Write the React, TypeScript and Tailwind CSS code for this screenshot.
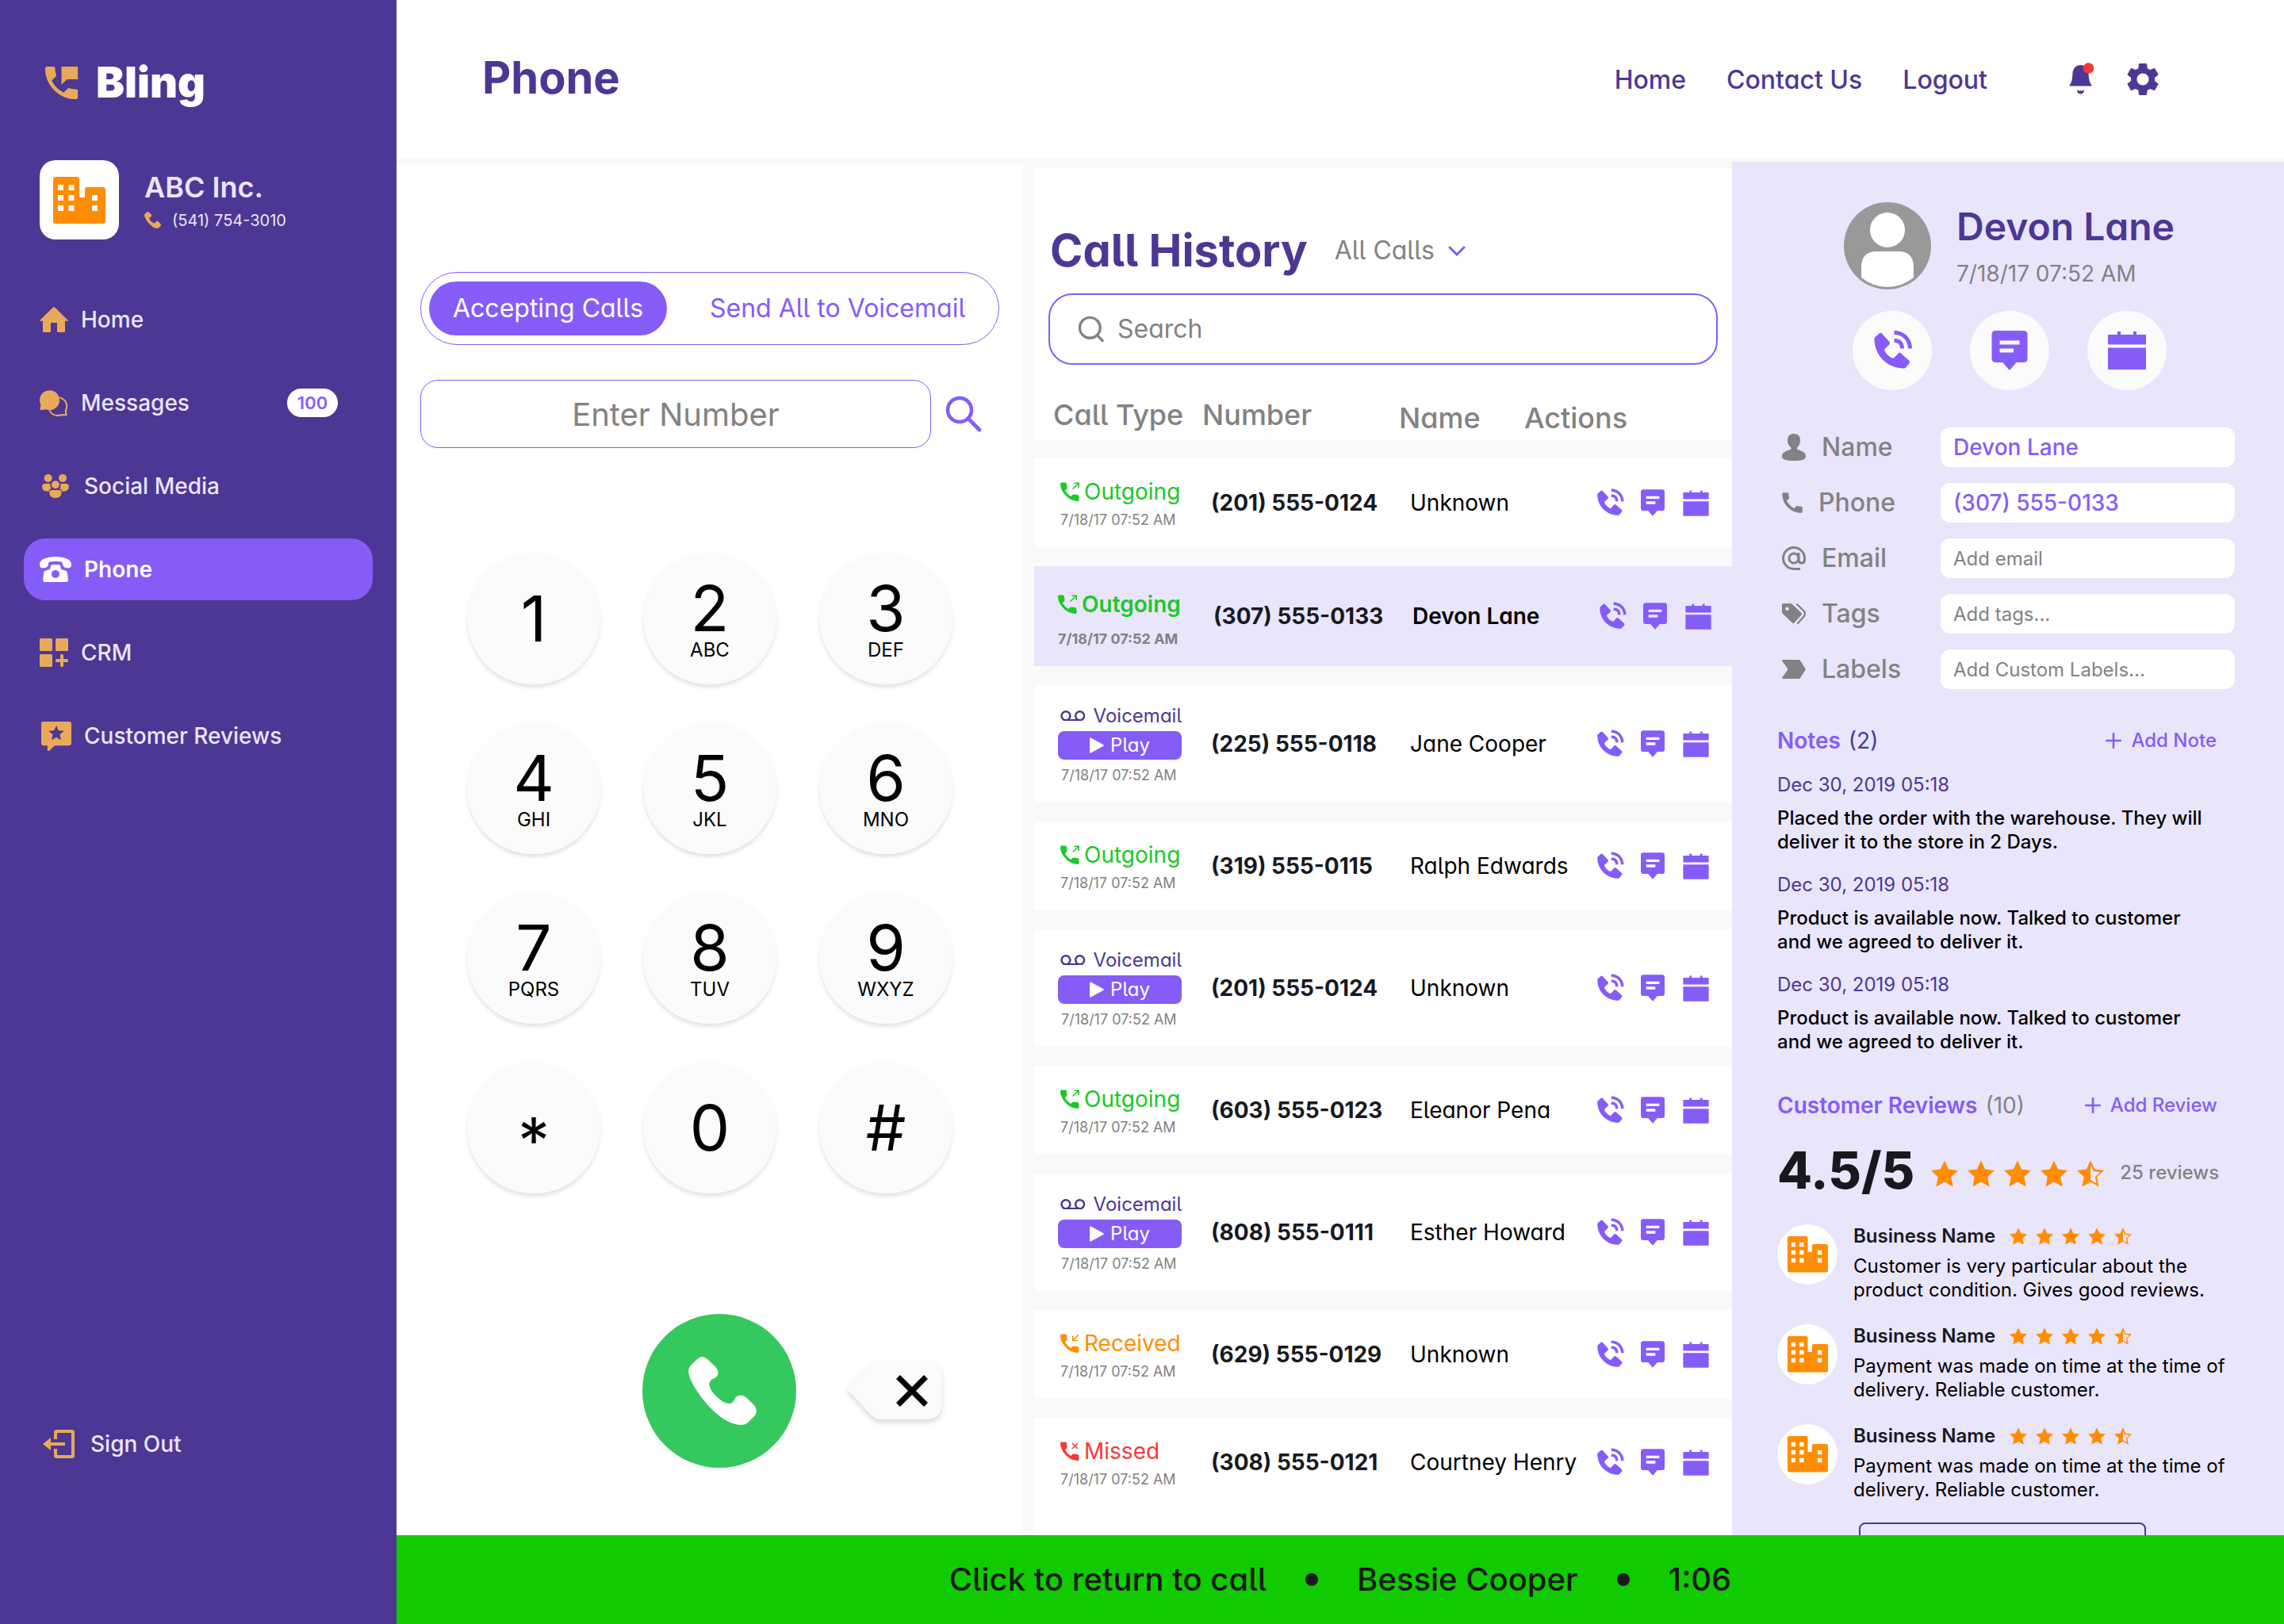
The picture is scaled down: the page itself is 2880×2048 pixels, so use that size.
import React from "react";
import { BiSolidPhoneCall } from "react-icons/bi";
import { MdPermPhoneMsg, MdSettings, MdCall } from "react-icons/md";

/* Inter with single-storey "a" and tailed "l" */
const ALT = "[font-feature-settings:'cv05','cv11']";

type IconProps = { className?: string };

function BuildingIcon({ className }: IconProps) {
  return (
    <svg viewBox="0 0 66 59" className={className} fill="currentColor" aria-hidden="true">
      <path
        fillRule="evenodd"
        d="M3 0H30a3 3 0 0 1 3 3V26H40V16a3 3 0 0 1 3-3H63a3 3 0 0 1 3 3V56a3 3 0 0 1-3 3H3a3 3 0 0 1-3-3V3a3 3 0 0 1 3-3ZM6 10v7h7v-7ZM19.500 10v7h7v-7ZM6 23v7h7v-7ZM19.500 23v7h7v-7ZM6 36v7h7v-7ZM19.500 36v7h7v-7ZM49 23v7h7v-7ZM49 36v7h7v-7Z"
      />
    </svg>
  );
}

function HandsetIcon({ className }: IconProps) {
  return (
    <svg viewBox="0 0 86 87" className={className} fill="currentColor" aria-hidden="true">
      <path d="M11 3Q17-3 24 3L34 12.500Q39 18 37 23Q35.500 26.500 31.500 27.500Q26.500 29.500 26.300 34.500Q27 43 37 51.500Q45 59 51 59Q56.500 59 58.500 53Q61 48.500 66 48.500Q70 48.500 72.500 51L83 61Q88 67 84 74L75 83Q72 86 66 86Q43 85 17 52Q0 29 0 17.500Q0 14 3 11Z" />
    </svg>
  );
}

function HomeIcon({ className }: IconProps) {
  return (
    <svg viewBox="0 0 36 32" className={className} fill="currentColor" aria-hidden="true">
      <path d="M17 .5Q18-.4 19 .5L36 17.200Q36.200 17.800 35.500 17.800H32V31Q32 32 31 32H23Q22 32 22 31V20H14V31Q14 32 13 32H5Q4 32 4 31V17.800H.5Q-.2 17.800 0 17.200Z" />
    </svg>
  );
}

function ChatsIcon({ className }: IconProps) {
  return (
    <svg viewBox="0 0 36 33" className={className} aria-hidden="true">
      <path
        fill="currentColor"
        d="M12.500.2A12.500 12.500 0 0 1 25 12.700 12.500 12.500 0 0 1 12.500 25.200Q10.300 25.200 8 24.200L2 25.200Q.4 25 .6 23.500L1.400 18.500Q0 15.500 0 12.700A12.500 12.500 0 0 1 12.500.2Z"
      />
      <path
        fill="none"
        stroke="currentColor"
        strokeWidth="2"
        strokeLinecap="round"
        strokeLinejoin="round"
        d="M25.500 9.400Q34 12 34.200 20.500Q34.200 23.500 32.800 26.300L33.600 31.500L28.500 31Q25 32.300 22 32Q15 31.500 12.700 25.500"
      />
    </svg>
  );
}

function PeopleIcon({ className }: IconProps) {
  return (
    <svg viewBox="0 0 34 30" className={className} fill="currentColor" aria-hidden="true">
      <circle cx="7.700" cy="5" r="5" />
      <circle cx="26" cy="5" r="5" />
      <path d="M3.500 12H10.500A6.500 6.500 0 0 0 12 18.300Q9 18.500 8.500 21.700Q0 22.300 0 15.500Q0 12 3.500 12Z" />
      <path d="M30.300 12H23.300A6.500 6.500 0 0 1 21.800 18.300Q24.800 18.500 25.300 21.700Q33.800 22.300 33.800 15.500Q33.800 12 30.300 12Z" />
      <circle cx="16.900" cy="13.300" r="5" />
      <path d="M12.200 20H21.600Q24.600 20 24.600 23Q24.600 30 16.900 30Q9.200 30 9.200 23Q9.200 20 12.200 20Z" />
    </svg>
  );
}

function TelephoneIcon({ className }: IconProps) {
  return (
    <svg viewBox="0 0 40 32" className={className} fill="currentColor" aria-hidden="true">
      <path d="M20 0C31 0 40 3.500 40 9.500C40 13.500 38.500 14.300 36 14.300C32 14.300 29.500 13 29 9.500C28.800 7.500 28.500 6.600 27.500 6.400Q20 5.300 12.500 6.400C11.500 6.600 11.200 7.500 11 9.500C10.500 13 8 14.300 4 14.300C1.500 14.300 0 13.500 0 9.500C0 3.500 9 0 20 0Z" />
      <path
        fillRule="evenodd"
        d="M16 10H24Q26 10 26 12Q26 15 28.500 16.500Q34 17.500 34.800 19.500L36 29Q36 32 33 32H7Q4 32 4.200 29L5.200 19.500Q6 17.500 11.500 16.500Q14 15 14 12Q14 10 16 10ZM20 17a5 5 0 1 0 0 10a5 5 0 1 0 0-10Z"
      />
    </svg>
  );
}

function WidgetsIcon({ className }: IconProps) {
  return (
    <svg viewBox="0 0 36 36" className={className} fill="currentColor" aria-hidden="true">
      <rect width="16" height="16" rx="1.500" />
      <rect x="20" width="16" height="16" rx="1.500" />
      <rect y="20" width="16" height="16" rx="1.500" />
      <rect x="20" y="26" width="16" height="4" rx="1.500" />
      <rect x="26" y="20" width="4" height="16" rx="1.500" />
    </svg>
  );
}

function ReviewBubbleIcon({ className }: IconProps) {
  return (
    <svg viewBox="0 0 38 37" className={className} fill="currentColor" aria-hidden="true">
      <path
        fillRule="evenodd"
        d="M3 0H35Q38 0 38 3V27Q38 30 35 30.300H17L10 37Q8 37.500 7.800 36V30.300H3Q0 30 0 27V3Q0 0 3 0ZM19 5L16.300 11.200L9.300 11.800L14.600 16.400L13 23.300L19 19.700L25 23.300L23.400 16.400L28.700 11.800L21.700 11.200Z"
      />
    </svg>
  );
}

function SignOutIcon({ className }: IconProps) {
  return (
    <svg viewBox="0 0 40 36" className={className} aria-hidden="true">
      <path
        fill="none"
        stroke="currentColor"
        strokeWidth="4"
        strokeLinejoin="round"
        d="M16 12V3.500Q16 2 17.500 2H36.500Q38 2 38 3.500V32.500Q38 34 36.500 34H17.500Q16 34 16 32.500V24"
      />
      <path fill="currentColor" d="M0 18L10 10V16H28V20H10V26Z" />
    </svg>
  );
}

function BellIcon({ className }: IconProps) {
  return (
    <svg viewBox="0 0 32 40" className={className} aria-hidden="true">
      <path
        fill="#4D3794"
        d="M14.500 3C20 3 24 7 24.500 13L25 19Q25.500 25 28.500 28.500V29.500H.5V28.500Q3.500 25 4 19L4.500 13C5 7 9 3 14.500 3ZM10 34.500Q12 34 13 36Q14.500 34 16 36Q17 34 19 34.500Q18.500 39.500 14.500 39.500Q10.500 39.500 10 34.500Z"
      />
      <circle cx="24.500" cy="7" r="6.800" fill="#F43939" />
    </svg>
  );
}

function MessageIcon({ className }: IconProps) {
  return (
    <svg viewBox="0 0 24 24" className={className} fill="currentColor" aria-hidden="true">
      <path
        fillRule="evenodd"
        d="M5 2H19Q21 2 21 4V16Q21 18 19 18H15.500L12 22L8.500 18H5Q3 18 3 16V4Q3 2 5 2ZM7 7V9H17V7ZM7 11V13H14V11Z"
      />
    </svg>
  );
}

function CalendarIcon({ className }: IconProps) {
  return (
    <svg viewBox="0 0 24 24" className={className} fill="currentColor" aria-hidden="true">
      <path d="M7.500 3H9V4.500H15V3H16.500V4.500H20.500Q21 4.500 21 5V9.200H3V5Q3 4.500 3.500 4.500H7.500ZM3 10.700H21V20.500Q21 21 20.500 21H3.500Q3 21 3 20.500Z" />
    </svg>
  );
}

function VoicemailIcon({ className }: IconProps) {
  return (
    <svg viewBox="0 0 33 14" className={className} fill="none" stroke="currentColor" strokeWidth="2.600" aria-hidden="true">
      <circle cx="7.300" cy="7" r="5.700" />
      <circle cx="25.700" cy="7" r="5.700" />
      <path d="M7.300 12.700H25.700" />
    </svg>
  );
}

const ARROWS: Record<string, string> = {
  Outgoing: "M15.500 8.500L23 1.500M17.500 1.200H23.200V7",
  Received: "M23 1.200L16 8.200M15.700 2.500V8.500H22",
  Missed: "M15 2L22 9M22 2L15 9",
};

function CallTypeIcon({ kind, className }: { kind: string; className?: string }) {
  return (
    <svg viewBox="0 0 24 24" className={className} aria-hidden="true">
      <path
        fill="currentColor"
        d="M1.500.5H6Q7.800.5 8 2.200L8.500 7Q8.500 8.300 7.500 9L5.800 10.500Q8.500 15.500 13.500 18L15 16.300Q16 15.200 17.300 15.500L22 16.200Q23.500 16.500 23.500 18V22.500Q23.500 24 22 24Q12 23.500 6 16Q0 9.500 0 2Q0 .5 1.500.5Z"
      />
      <path fill="none" stroke="currentColor" strokeWidth="1.600" d={ARROWS[kind]} />
    </svg>
  );
}

function SearchIcon({ className, thin }: IconProps & { thin?: boolean }) {
  return (
    <svg viewBox="0 0 46 46" className={className} fill="none" stroke="currentColor" strokeWidth="4.600" strokeLinecap="round" aria-hidden="true">
      {thin ? (
        <>
          <circle cx="20" cy="20" r="18" />
          <path d="M33 33.500L42 42.500" />
        </>
      ) : (
        <>
          <circle cx="18" cy="18" r="15" />
          <path d="M29 29L43 43" />
        </>
      )}
    </svg>
  );
}

function PersonIcon({ className }: IconProps) {
  return (
    <svg viewBox="0 0 30 34" className={className} fill="currentColor" aria-hidden="true">
      <path d="M15 0C20.500 0 23 3.500 23 8.500C23 12 21.500 15.500 19 17.500V19.500C24 21.500 30 23 30 28.500C30 33 24 34 15 34S0 33 0 28.500C0 23 6 21.500 11.500 19.500V17.500C8.500 15.500 7 12 7 8.500C7 3.500 9.500 0 15 0Z" />
    </svg>
  );
}

function AtIcon({ className }: IconProps) {
  return (
    <svg viewBox="0 0 30 30" className={className} fill="none" stroke="currentColor" strokeWidth="3" aria-hidden="true">
      <circle cx="15" cy="15" r="6" />
      <path d="M21 8V17.500Q21.300 21 24.800 21Q28.500 21 28.500 17V15A13.500 13.500 0 1 0 15 28.500H23" />
    </svg>
  );
}

function TagsIcon({ className }: IconProps) {
  return (
    <svg viewBox="0 0 30 26" className={className} aria-hidden="true">
      <path
        fill="currentColor"
        fillRule="evenodd"
        d="M2 0H10.500Q12 0 13 1L24.500 12Q25.700 13.300 24.500 14.500L15.500 24.500Q14.300 25.700 13 24.500L1 13Q0 12 0 10.500V2Q0 0 2 0ZM6.500 4.500a2.200 2.200 0 1 0 0 4.400a2.200 2.200 0 1 0 0-4.400Z"
      />
      <path fill="none" stroke="currentColor" strokeWidth="2.200" strokeLinecap="round" d="M19 1.200L27.500 9.500Q30.500 13 27.500 16.500L20 25" />
    </svg>
  );
}

function LabelIcon({ className }: IconProps) {
  return (
    <svg viewBox="0 0 30 24" className={className} fill="currentColor" aria-hidden="true">
      <path d="M1 0H21Q22.300 0 23 1L30 12L23 23Q22.300 24 21 24H1Q-.3 23.500.3 22.500L7.500 12L.3 1.500Q-.3.3 1 0Z" />
    </svg>
  );
}

function PlusIcon({ className }: IconProps) {
  return (
    <svg viewBox="0 0 20 20" className={className} fill="none" stroke="currentColor" strokeWidth="2.600" strokeLinecap="round" aria-hidden="true">
      <path d="M10 1.200V18.800M1.200 10H18.800" />
    </svg>
  );
}

const STAR = "M17 .5L22.200 11.500L34 13L25.300 21.300L27.600 33.500L17 27.600L6.400 33.500L8.700 21.300L0 13L11.800 11.500Z";

function Star({ half, className }: IconProps & { half?: boolean }) {
  return (
    <svg viewBox="0 0 34 34" className={className} fill="currentColor" aria-hidden="true">
      <path
        fillRule="evenodd"
        d={half ? STAR + "M17 6L20.700 14L29.500 15.100L23 21.300L24.600 29.300L17 25Z" : STAR}
      />
    </svg>
  );
}

function Stars({ large }: { large?: boolean }) {
  return (
    <div className={large ? "flex gap-3" : "flex gap-[11px]"} role="img" aria-label="4.5 out of 5">
      {[0, 1, 2, 3, 4].map((i) => (
        <Star key={i} half={i === 4} className={large ? "size-[34px] text-[#FF8D03]" : "size-[22px] text-[#FF8D03]"} />
      ))}
    </div>
  );
}

const NAV = [
  { label: "Home", icon: <HomeIcon className="w-9" /> },
  { label: "Messages", icon: <ChatsIcon className="w-9" />, badge: "100" },
  { label: "Social Media", icon: <PeopleIcon className="mx-[3px] w-[34px]" /> },
  { label: "Phone", icon: <TelephoneIcon className="w-10" />, active: true },
  { label: "CRM", icon: <WidgetsIcon className="w-9" /> },
  { label: "Customer Reviews", icon: <ReviewBubbleIcon className="ml-0.5 w-[38px]" /> },
];

function Sidebar() {
  return (
    <aside className="flex w-[500px] shrink-0 flex-col bg-[#4D3794] px-[30px] text-[#E9E5FB]">
      <div className="mt-[70px] flex items-center gap-4 pl-5">
        <MdPermPhoneMsg className="size-[55px] text-[#E8A95B]" />
        <span className="text-[54px] leading-[68px] font-black text-white">Bling</span>
      </div>
      <div className="mt-16 flex items-center gap-8 pl-5">
        <div className="flex size-[100px] items-center justify-center rounded-[20px] bg-white text-[#FF8D03]">
          <BuildingIcon className="w-[66px]" />
        </div>
        <div className="pt-1">
          <div className="text-[36px] leading-[44px] font-semibold">ABC Inc.</div>
          <div className="mt-1 flex items-center gap-3.5 text-[20px] leading-8">
            <HandsetIcon className="w-[21px] text-[#E8A95B]" />
            (541) 754-3010
          </div>
        </div>
      </div>
      <nav className="mt-[62px] flex flex-col gap-[27px]">
        {NAV.map((item) => (
          <a
            key={item.label}
            href="#"
            className={
              item.active
                ? "flex h-[78px] items-center gap-4 rounded-[27px] bg-[#855CF8] px-5 text-[28px] font-semibold text-white"
                : "flex h-[78px] items-center gap-4 rounded-[27px] px-5 text-[28px] font-medium"
            }
          >
            <span className={item.active ? "text-white" : "text-[#E8A95B]"}>{item.icon}</span>
            {item.label}
            {item.badge && (
              <span className="mr-6 ml-auto flex h-9 w-16 items-center justify-center rounded-full bg-white text-[22px] font-semibold text-[#855CF8]">
                {item.badge}
              </span>
            )}
          </a>
        ))}
      </nav>
      <button className="mt-auto mb-[188px] flex h-[78px] items-center gap-5 px-6 text-[28px] font-medium">
        <SignOutIcon className="w-10 text-[#E8A95B]" />
        Sign Out
      </button>
    </aside>
  );
}

function Header() {
  return (
    <header className="flex h-[200px] shrink-0 items-start bg-white pr-[153px] pl-[108px] text-[#4D3794]">
      <h1 className="mt-16 text-[56px] leading-[68px] font-bold">Phone</h1>
      <nav className={"mt-[81px] ml-auto flex items-center gap-[51px] text-[32px] leading-10 font-medium " + ALT}>
        <a href="#">Home</a>
        <a href="#">Contact Us</a>
        <a href="#">Logout</a>
      </nav>
      <button aria-label="Notifications" className="mt-[79px] ml-[103px]">
        <BellIcon className="w-8" />
      </button>
      <button aria-label="Settings" className="mt-[75px] ml-9">
        <MdSettings className="size-[50px]" />
      </button>
    </header>
  );
}

const KEYS: [string, string?][] = [
  ["1"], ["2", "ABC"], ["3", "DEF"],
  ["4", "GHI"], ["5", "JKL"], ["6", "MNO"],
  ["7", "PQRS"], ["8", "TUV"], ["9", "WXYZ"],
  ["*"], ["0"], ["#"],
];

function Dialer() {
  return (
    <section className="mt-1.5 flex flex-col bg-white px-[30px] pt-[137px]">
      <div className={"flex h-[92px] items-center rounded-full border border-[#855CF8] px-2.5 text-[32px] " + ALT}>
        <button className="h-[68px] rounded-full bg-[#855CF8] px-[30px] text-white">Accepting Calls</button>
        <button className="flex-1 pl-[22px] text-[#855CF8]">Send All to Voicemail</button>
      </div>
      <div className="mt-11 flex items-center">
        <input
          aria-label="Phone number"
          placeholder="Enter Number"
          className="h-[86px] min-w-0 flex-1 rounded-[22px] border border-[#855CF8] text-center text-[40px] text-black placeholder:text-[#828282]"
        />
        <button aria-label="Find number" className="mr-[22px] ml-[18px] text-[#855CF8]">
          <SearchIcon className="size-[46px]" />
        </button>
      </div>
      <div className="mx-auto mt-[132px] grid grid-cols-3 gap-x-[54px] gap-y-12">
        {KEYS.map(([digit, letters]) => (
          <button
            key={digit}
            className="flex h-[166px] w-[168px] flex-col items-center justify-center rounded-full bg-[#FBFBFB] text-black shadow-[0_4px_4px_rgba(0,0,0,0.1)]"
          >
            <span className={digit === "*" ? "pt-8 text-[80px] leading-[80px]" : "text-[80px] leading-[80px]"}>{digit}</span>
            {letters && <span className="text-[24px] leading-[26px]">{letters}</span>}
          </button>
        ))}
      </div>
      <div className="mt-[152px] flex items-center justify-center gap-16 pl-[212px]">
        <button aria-label="Call" className="flex size-[194px] items-center justify-center rounded-full bg-[#34C85E] pl-2 text-white">
          <HandsetIcon className="w-[86px]" />
        </button>
        <button aria-label="Delete digit">
          <svg viewBox="0 0 124 84" className="w-[124px] overflow-visible">
            <path
              className="drop-shadow-[0_4px_3px_rgba(0,0,0,0.14)]"
              fill="#FBFBFB"
              d="M2 42Q0 39 2 36L28 10Q36 4 44 4H100Q119 5 120 24V58Q119 77 100 78H42Q34 77 28 70Z"
            />
            <path stroke="#000" strokeWidth="7" d="M64.500 24.500L99.500 59.500M99.500 24.500L64.500 59.500" />
          </svg>
        </button>
      </div>
    </section>
  );
}

type Call = { kind: "Outgoing" | "Voicemail" | "Received" | "Missed"; number: string; name: string; selected?: boolean };

const CALLS: Call[] = [
  { kind: "Outgoing", number: "(201) 555-0124", name: "Unknown" },
  { kind: "Outgoing", number: "(307) 555-0133", name: "Devon Lane", selected: true },
  { kind: "Voicemail", number: "(225) 555-0118", name: "Jane Cooper" },
  { kind: "Outgoing", number: "(319) 555-0115", name: "Ralph Edwards" },
  { kind: "Voicemail", number: "(201) 555-0124", name: "Unknown" },
  { kind: "Outgoing", number: "(603) 555-0123", name: "Eleanor Pena" },
  { kind: "Voicemail", number: "(808) 555-0111", name: "Esther Howard" },
  { kind: "Received", number: "(629) 555-0129", name: "Unknown" },
  { kind: "Missed", number: "(308) 555-0121", name: "Courtney Henry" },
];

const KIND_COLOR = {
  Outgoing: "text-[#1AC92A]",
  Voicemail: "text-[#4D3794]",
  Received: "text-[#FF8D03]",
  Missed: "text-[#F43939]",
};

function CallType({ call }: { call: Call }) {
  if (call.kind === "Voicemail") {
    return (
      <div className="w-[156px]">
        <div className="flex items-center gap-2.5 pl-[3px] text-[24px] leading-8 text-[#4D3794]">
          <VoicemailIcon className="w-[33px]" />
          Voicemail
        </div>
        <button className="mt-[3px] flex h-9 w-full items-center justify-center gap-2 rounded-lg bg-[#855CF8] text-[24px] leading-8 text-white">
          <svg viewBox="0 0 18 20" className="w-[18px]" fill="currentColor" aria-hidden="true">
            <path d="M0 1Q.5 0 1.500.4L17.500 9.300Q18.200 10 17.500 10.700L1.500 19.600Q.5 20 0 19Z" />
          </svg>
          Play
        </button>
        <div className="mt-2 pl-1 text-[18px] leading-6 text-[#828282]">7/18/17 07:52 AM</div>
      </div>
    );
  }
  return (
    <div className={call.selected ? "pt-1.5 font-semibold" : "pl-[3px]"}>
      <div className={"flex items-center gap-1.5 text-[28px] leading-10 " + KIND_COLOR[call.kind]}>
        <CallTypeIcon kind={call.kind} className="size-6" />
        {call.kind}
      </div>
      <div className={call.selected ? "mt-3 text-[18px] leading-6 font-bold text-[#828282]" : "mt-1 text-[18px] leading-6 text-[#828282]"}>
        7/18/17 07:52 AM
      </div>
    </div>
  );
}

function CallRow({ call }: { call: Call }) {
  const cell = "border-t-[24px] border-[#F9F9F9] p-0 ";
  return (
    <tr
      className={
        call.selected
          ? "h-[150px] bg-[#E9E5FB]"
          : call.kind === "Voicemail"
            ? "h-[172px] bg-white"
            : "h-[136px] bg-white"
      }
    >
      <td className={cell + "pl-[30px]"}>
        <CallType call={call} />
      </td>
      <td className={cell + "text-[28px] font-bold whitespace-nowrap text-[#18191F] " + (call.selected ? "pl-3.5" : "pl-[11px]")}>{call.number}</td>
      <td className={cell + "text-[28px] whitespace-nowrap text-black " + (call.selected ? "pl-[17px] font-semibold" : "pl-3.5")}>{call.name}</td>
      <td className={cell + (call.selected ? "pr-[21px]" : "pr-6")}>
        <div className="flex items-center justify-end gap-[13px] text-[#855CF8]">
          <button aria-label="Call"><BiSolidPhoneCall className="size-[42px]" /></button>
          <button aria-label="Message"><MessageIcon className="size-10" /></button>
          <button aria-label="Schedule"><CalendarIcon className="size-[43px]" /></button>
        </div>
      </td>
    </tr>
  );
}

function CallHistory() {
  return (
    <section className={"mt-3 ml-3.5 bg-white " + ALT}>
      <div className="flex items-center pt-[68px] pl-5">
        <h2 className="text-[56px] leading-[72px] font-bold text-[#4D3794]">Call History</h2>
        <select aria-label="Filter calls" className="ml-[34px] appearance-none bg-transparent text-[32px] text-[#828282]">
          <option>All Calls</option>
        </select>
        <svg viewBox="0 0 22 13" className="ml-4 w-[22px] text-[#855CF8]" fill="none" stroke="currentColor" strokeWidth="3" strokeLinecap="round" aria-hidden="true">
          <path d="M2 2L11 11L20 2" />
        </svg>
      </div>
      <label className="mx-[18px] mt-[18px] flex h-[90px] items-center gap-4 rounded-[30px] border-2 border-[#855CF8] px-9 text-[#828282]">
        <SearchIcon thin className="size-[33px]" />
        <input aria-label="Search" placeholder="Search" className="min-w-0 flex-1 text-[32px] outline-none placeholder:text-[#828282]" />
      </label>
      <table className="w-full table-fixed border-separate border-spacing-0">
        <colgroup>
          <col className="w-[212px]" />
          <col className="w-[248px]" />
          <col className="w-[158px]" />
          <col />
        </colgroup>
        <thead>
          <tr className="h-[94px] text-left text-[36px] text-[#828282]">
            <th className="p-0 pt-8 pl-6 font-medium whitespace-nowrap">Call Type</th>
            <th className="p-0 pt-8 font-medium">Number</th>
            <th className="p-0 pt-10 font-medium">Name</th>
            <th className="p-0 pt-10 font-medium">Actions</th>
          </tr>
        </thead>
        <tbody>
          {CALLS.map((call, i) => (
            <CallRow key={i} call={call} />
          ))}
        </tbody>
      </table>
    </section>
  );
}

const FIELDS = [
  { id: "name", label: "Name", value: "Devon Lane", icon: <PersonIcon className="w-[30px]" /> },
  { id: "phone", label: "Phone", value: "(307) 555-0133", icon: <MdCall className="-m-1 size-[34px]" /> },
  { id: "email", label: "Email", placeholder: "Add email", icon: <AtIcon className="w-[30px]" /> },
  { id: "tags", label: "Tags", placeholder: "Add tags...", icon: <TagsIcon className="w-[30px]" /> },
  { id: "labels", label: "Labels", placeholder: "Add Custom Labels...", icon: <LabelIcon className="w-[30px]" /> },
];

const NOTES = [
  "Placed the order with the warehouse. They will deliver it to the store in 2 Days.",
  "Product is available now. Talked to customer and we agreed to deliver it.",
  "Product is available now. Talked to customer and we agreed to deliver it.",
];

const REVIEWS = [
  "Customer is very particular about the product condition. Gives good reviews.",
  "Payment was made on time at the time of delivery. Reliable customer.",
  "Payment was made on time at the time of delivery. Reliable customer.",
];

function ContactPanel() {
  return (
    <section className="mt-1 overflow-hidden bg-[#E9E5FB] pt-[51px] pr-[62px] pl-[57px]">
      <div className="flex items-center justify-center gap-8 pl-2">
        <svg viewBox="0 0 110 110" className="w-[110px]" aria-hidden="true">
          <circle cx="55" cy="55" r="55" fill="#999" />
          <circle cx="55" cy="35" r="22" fill="#fff" />
          <path fill="#fff" d="M22 82Q22 62 42 62H68Q88 62 88 82V95Q73 107 55 107T22 95Z" />
        </svg>
        <div>
          <h2 className={"text-[48px] leading-[58px] font-semibold text-[#4D3794] " + ALT}>Devon Lane</h2>
          <p className="mt-3 text-[28px] leading-9 text-[#828282]">7/18/17 07:52 AM</p>
        </div>
      </div>
      <div className="mt-[27px] flex justify-center gap-12 pl-2 text-[#855CF8]">
        <button aria-label="Call" className="flex size-[100px] items-center justify-center rounded-full bg-[#FBFBFB]">
          <BiSolidPhoneCall className="size-[60px]" />
        </button>
        <button aria-label="Message" className="flex size-[100px] items-center justify-center rounded-full bg-[#FBFBFB]">
          <MessageIcon className="size-[60px]" />
        </button>
        <button aria-label="Schedule" className="flex size-[100px] items-center justify-center rounded-full bg-[#FBFBFB]">
          <CalendarIcon className="size-16" />
        </button>
      </div>
      <div className="mt-[47px] flex flex-col gap-5">
        {FIELDS.map((f) => (
          <div key={f.id} className="flex items-center pl-1.5 text-[#828282]">
            <label htmlFor={f.id} className="flex w-[200px] items-center gap-5 text-[32px] leading-10 font-medium">
              {f.icon}
              {f.label}
            </label>
            <input
              id={f.id}
              defaultValue={f.value}
              placeholder={f.placeholder}
              className={
                f.value
                  ? "h-[50px] min-w-0 flex-1 rounded-xl bg-white px-4 text-[28px] font-medium text-[#855CF8]"
                  : "h-[50px] min-w-0 flex-1 rounded-xl bg-white px-4 text-[24px] placeholder:text-[#828282]"
              }
            />
          </div>
        ))}
      </div>

      <div className="mt-[47px] flex items-center justify-between pr-[23px]">
        <h3 className="flex gap-2.5 text-[28px] leading-9 font-semibold text-[#855CF8]">
          Notes <span className="font-normal text-[#4D3794]">(2)</span>
        </h3>
        <button className="flex items-center gap-3 text-[24px] leading-9 font-medium text-[#855CF8]">
          <PlusIcon className="w-5" />
          Add Note
        </button>
      </div>
      <div className="mt-[23px] flex flex-col gap-6 text-[24px] leading-[30px]">
        {NOTES.map((n, i) => (
          <div key={i}>
            <div className="text-[#4D3794]">Dec 30, 2019 05:18</div>
            <p className="mt-3 mr-5 font-medium text-black">{n}</p>
          </div>
        ))}
      </div>

      <div className="mt-[47px] flex items-center justify-between pr-[22px]">
        <h3 className="flex gap-2.5 text-[28px] leading-9 font-semibold text-[#855CF8]">
          Customer Reviews <span className="font-normal text-[#828282]">(10)</span>
        </h3>
        <button className="flex items-center gap-3 text-[24px] leading-9 font-medium text-[#855CF8]">
          <PlusIcon className="w-5" />
          Add Review
        </button>
      </div>
      <div className="mt-6 flex items-center">
        <span className="text-[64px] leading-[80px] font-extrabold text-[#18191F]">4.5/5</span>
        <div className="ml-[21px] pt-2">
          <Stars large />
        </div>
        <span className="ml-5 pt-1.5 text-[24px] font-medium text-[#828282]">25 reviews</span>
      </div>
      <div className="mt-7 flex flex-col gap-7">
        {REVIEWS.map((r, i) => (
          <div key={i} className="flex gap-5">
            <div className="flex size-[76px] shrink-0 items-center justify-center rounded-full bg-white text-[#FF8D03]">
              <BuildingIcon className="w-[51px]" />
            </div>
            <div className="-mr-2">
              <div className="flex items-center gap-[18px] text-[24px] leading-[30px] font-semibold text-[#18191F]">
                Business Name
                <Stars />
              </div>
              <p className="mt-2 text-[24px] leading-[30px] text-black">{r}</p>
            </div>
          </div>
        ))}
      </div>
      <button aria-label="More reviews" className="mt-[26px] ml-[103px] h-[60px] w-[362px] rounded-lg border-2 border-[#4D3794]" />
    </section>
  );
}

export default function App() {
  return (
    <div className="flex h-screen bg-[#F9F9F9] font-['Inter',sans-serif]">
      <Sidebar />
      <div className="flex min-w-0 flex-1 flex-col">
        <Header />
        <main className="grid min-h-0 flex-1 grid-cols-[790fr_894fr_696fr] overflow-hidden">
          <Dialer />
          <CallHistory />
          <ContactPanel />
        </main>
        <button className={"flex h-28 shrink-0 items-center justify-center gap-[49px] bg-[#11CA00] text-[40px] font-medium text-[#18191F] " + ALT}>
          <span>Click to return to call</span>
          <span className="size-4 rounded-full bg-[#18191F]" />
          <span>Bessie Cooper</span>
          <span className="size-4 rounded-full bg-[#18191F]" />
          <span>1:06</span>
        </button>
      </div>
    </div>
  );
}
